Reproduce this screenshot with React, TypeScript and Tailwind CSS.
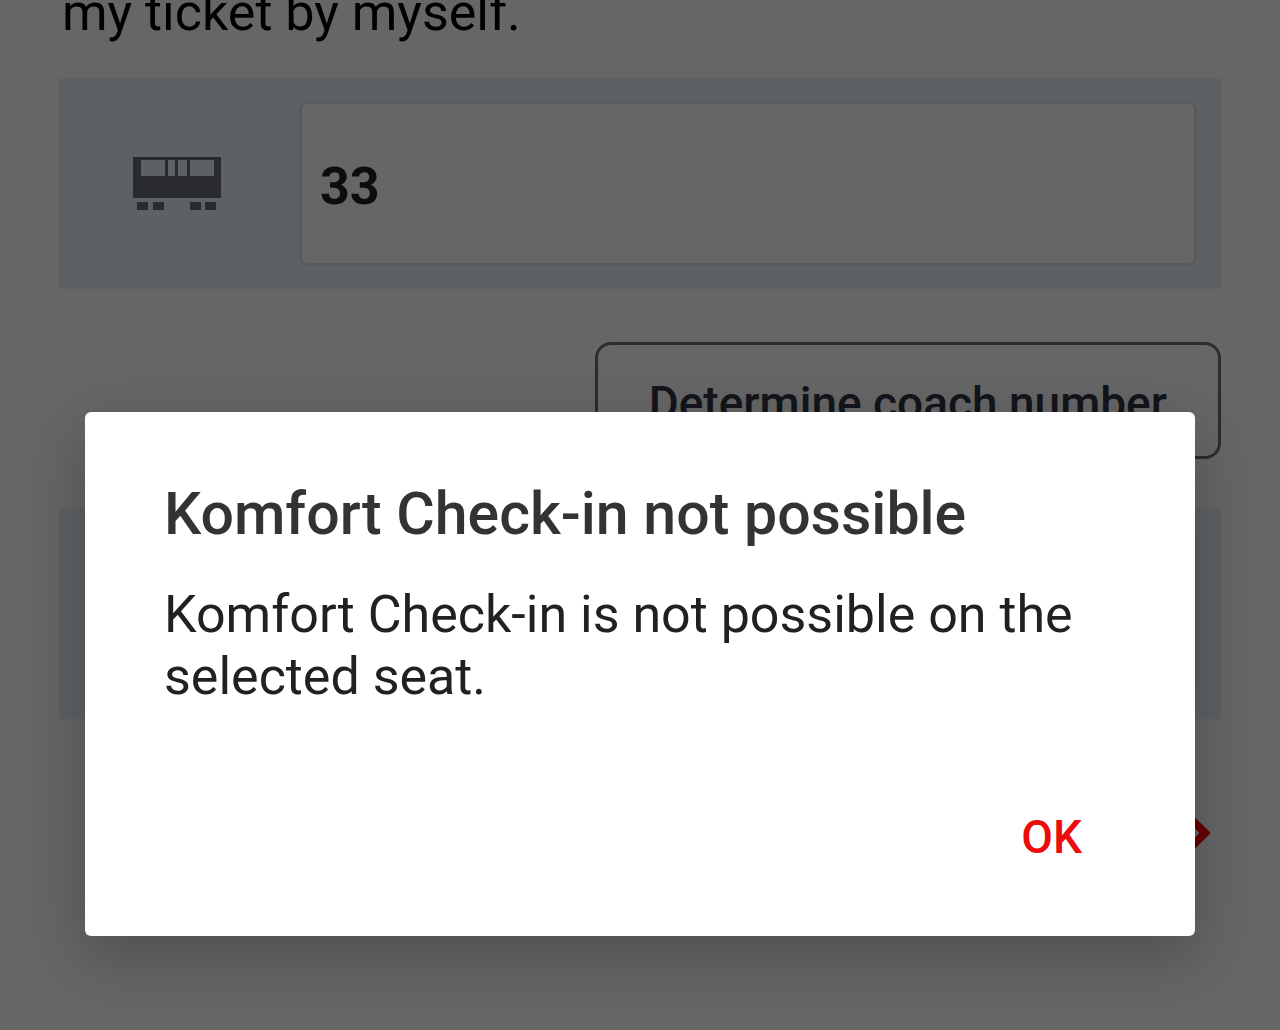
import type { ReactNode } from "react";

function CoachIcon() {
  return (
    <svg width="88" height="54" viewBox="0 0 88 54" aria-hidden="true">
      <path
        fill="#696a7a"
        fillRule="evenodd"
        d="M0 0H88V41H0ZM8 3V19H32V3ZM35 3V19H42V3ZM45 3V19H54V3ZM57 3V19H81V3Z"
      />
      <path fill="#696a7a" d="M4 45H15V53H4ZM20 45H31V53H20ZM57 45H68V53H57ZM72 45H83V53H72Z" />
    </svg>
  );
}

function SeatIcon() {
  return (
    <svg width="88" height="88" viewBox="0 0 24 24" fill="none" stroke="#696a7a" strokeWidth="2" aria-hidden="true">
      <path d="M7 4v11h9v5M7 20h9" />
    </svg>
  );
}

function Field({ id, label, value, icon }: { id: string; label: string; value: string; icon: ReactNode }) {
  return (
    <div className="flex items-center bg-[#ecf2f8] py-[23px] pr-6">
      <label htmlFor={id} aria-label={label} className="flex w-60 shrink-0 justify-center pr-1">
        {icon}
      </label>
      <input
        id={id}
        defaultValue={value}
        className="h-[165px] min-w-0 flex-1 rounded-lg border-3 border-[#dee3e8] bg-white px-[18px] pt-1.5 text-[52px] font-bold text-[#222222] outline-none"
      />
    </div>
  );
}

export default function App() {
  return (
    <div className="relative h-screen overflow-hidden bg-white font-['Roboto',sans-serif]">
      <main className="px-[59px]">
        <div className="flex h-11 items-end overflow-hidden pl-[3px]">
          <p className="text-[52px] leading-[62px] text-black">my ticket by myself.</p>
        </div>
        <div className="mt-[34px]">
          <Field id="coach" label="Coach" value="33" icon={<CoachIcon />} />
        </div>
        <div className="mt-[53px] flex justify-end">
          <button
            type="button"
            className="h-[117px] rounded-2xl border-3 border-[#6c6d7a] px-[51px] pt-1.5 text-[46px] font-medium text-[#323544]"
          >
            Determine coach number
          </button>
        </div>
        <div className="mt-[49px]">
          <Field id="seat" label="Seat" value="" icon={<SeatIcon />} />
        </div>
        <div className="mt-[89px] flex justify-end pr-[11px]">
          <a href="#next" aria-label="Continue">
            <svg width="30" height="50" viewBox="0 0 30 50" fill="none" aria-hidden="true">
              <path d="M4 4L25 25L4 46" stroke="#ff0000" strokeWidth="8" />
            </svg>
          </a>
        </div>
      </main>

      <div className="absolute inset-0 flex items-start bg-black/60 px-[85px] pt-[412px]">
        <section
          role="alertdialog"
          aria-labelledby="dialog-title"
          aria-describedby="dialog-text"
          className="flex-1 rounded-md bg-white px-[79px] pt-[67px] pb-[59px] shadow-[0_20px_64px_rgba(0,0,0,0.24)]"
        >
          <h1 id="dialog-title" className="text-[59px] leading-[70px] font-medium text-[#333333]">
            Komfort Check-in not possible
          </h1>
          <p id="dialog-text" className="mt-[35px] text-[52px] leading-[62px] text-[#212121]">
            Komfort Check-in is not possible on the selected seat.
          </p>
          <div className="mt-[89px] flex justify-end pr-[18px]">
            <button type="button" className="h-20 px-4 text-[46px] font-medium text-[#ec0c0c]">
              OK
            </button>
          </div>
        </section>
      </div>
    </div>
  );
}
